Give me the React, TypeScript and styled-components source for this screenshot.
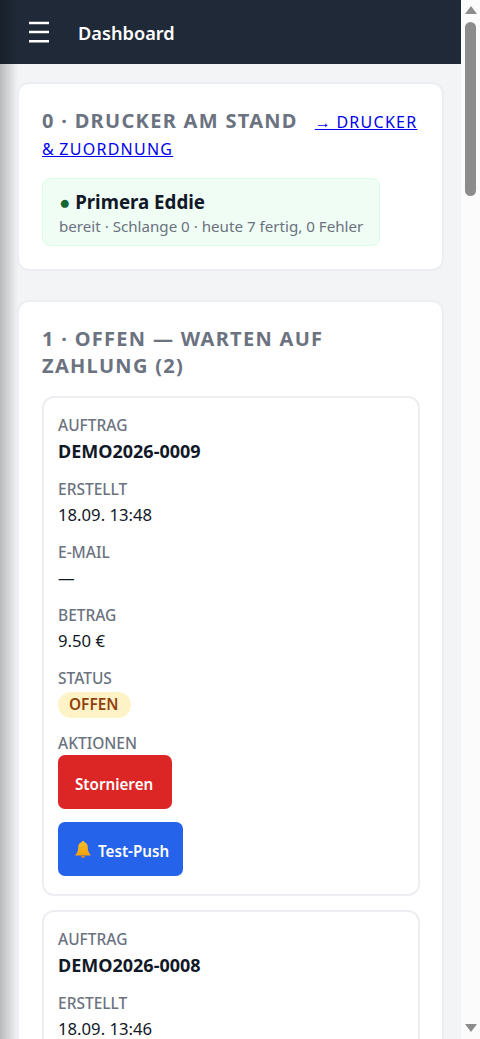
import React from 'react';
import styled, { createGlobalStyle } from 'styled-components';

const GlobalStyle = createGlobalStyle`
  html, body {
    margin: 0;
    padding: 0;
    height: 100%;
    overflow: hidden;
    background: #fafafa;
  }
  body {
    font-family: "Noto Sans", "Open Sans", sans-serif;
    color: #111827;
  }
  * { box-sizing: border-box; }
`;

const Shell = styled.div`
  display: flex;
  width: 480px;
  height: 1039px;
  overflow: hidden;
`;

const Page = styled.div`
  position: relative;
  width: 461px;
  height: 1039px;
  flex: none;
  overflow: hidden;
  background: #f3f4f6;
  &::before {
    content: "";
    position: absolute;
    left: 0;
    top: 0;
    bottom: 0;
    width: 18px;
    background: linear-gradient(to right, rgba(0, 0, 0, 0.24), rgba(0, 0, 0, 0));
    z-index: 2;
  }
`;

const TopBar = styled.header`
  display: flex;
  align-items: center;
  gap: 29px;
  height: 64px;
  padding-left: 29px;
  background: #1f2937;
  color: #fff;
`;

const MenuIcon = styled.svg`
  width: 20px;
  height: 22px;
  display: block;
`;

const PageTitle = styled.div`
  margin-top: 1px;
  font-size: 18.2px;
  font-weight: 600;
`;

const Content = styled.main`
  display: flex;
  flex-direction: column;
  gap: 29px;
  padding: 18px 17px 0;
`;

const Panel = styled.section`
  padding: 23px 22px 23px 23px;
  background: #fff;
  border: 2px solid #eceef1;
  border-radius: 12px;
`;

const SectionTitle = styled.h2`
  margin: 0 0 17px;
  font-size: 20px;
  line-height: 27px;
  font-weight: 700;
  letter-spacing: 1.3px;
  color: #6b7280;
  text-transform: uppercase;
`;

const SectionLink = styled.a`
  margin-left: 17px;
  font-size: 16px;
  line-height: 20px;
  font-weight: 400;
  letter-spacing: 1.25px;
  word-spacing: -1px;
  color: #0000ee;
  text-decoration: underline;
`;

const PrinterBox = styled.div`
  width: 338px;
  padding: 8px 16px 10px;
  background: #f0fdf4;
  border: 1px solid #dcfce7;
  border-radius: 8px;
`;

const PrinterName = styled.div`
  font-size: 18.7px;
  line-height: 30px;
  font-weight: 700;
  color: #111827;
`;

const StatusDot = styled.span`
  color: #166534;
`;

const PrinterInfo = styled.div`
  font-size: 15.15px;
  line-height: 18px;
  color: #6b7280;
  white-space: nowrap;
`;

const OrderList = styled.div`
  display: flex;
  flex-direction: column;
  gap: 14px;
`;

const OrderCard = styled.article`
  padding: 17px 14px 18px;
  background: #fff;
  border: 2px solid #eceef1;
  border-radius: 12px;
`;

const Field = styled.div`
  margin-bottom: 12px;
  &:last-child { margin-bottom: 0; }
`;

const FieldLabel = styled.div`
  font-size: 15.5px;
  line-height: 20px;
  font-weight: 500;
  color: #6b7280;
  text-transform: uppercase;
`;

const FieldValue = styled.div<{ $strong?: boolean }>`
  font-size: ${p => (p.$strong ? '18px' : '16.7px')};
  line-height: ${p => (p.$strong ? '32px' : '31px')};
  font-weight: ${p => (p.$strong ? 700 : 400)};
  color: #111827;
`;

const Badge = styled.span`
  display: block;
  width: fit-content;
  margin: 4px 0 15px;
  padding: 0 13px 0 11px;
  height: 26px;
  line-height: 26px;
  border-radius: 13px;
  background: #fef3c7;
  color: #92400e;
  font-size: 15.4px;
  font-weight: 600;
`;

const Actions = styled.div`
  display: flex;
  flex-direction: column;
  align-items: flex-start;
  gap: 13px;
  margin-top: 2px;
`;

const Button = styled.button<{ $tone: 'red' | 'blue' }>`
  display: inline-flex;
  align-items: center;
  gap: 7px;
  height: 54px;
  padding: 3px ${p => (p.$tone === 'red' ? '19px' : '14px')} 0 17px;
  border: 0;
  border-radius: 7px;
  font-family: inherit;
  font-size: 15.2px;
  font-weight: 600;
  color: #fff;
  background: ${p => (p.$tone === 'red' ? '#dc2626' : '#2563eb')};
`;

const BellIcon = styled.svg`
  width: 16px;
  height: 17px;
  margin-top: -3px;
  display: block;
`;

const ScrollTrack = styled.aside`
  display: flex;
  flex-direction: column;
  align-items: center;
  width: 19px;
  height: 1039px;
  flex: none;
  background: #fbfbfb;
`;

const ArrowBox = styled.svg`
  width: 12px;
  height: 8px;
  margin-top: 6px;
  flex: none;
  display: block;
`;

const ScrollThumb = styled.div`
  width: 11px;
  height: 174px;
  margin-top: 8px;
  border-radius: 6px;
  background: #8c8c8c;
`;

const ScrollSpacer = styled.div`
  flex: 1;
`;

const BottomArrow = styled(ArrowBox)`
  margin: 0 0 7px;
`;

const Bell = () => (
  <BellIcon viewBox="1.7 1 12.6 14.3" aria-hidden="true">
    <defs>
      <linearGradient id="bell" x1="0" y1="0" x2="0" y2="1">
        <stop offset="0" stopColor="#fbc02d" />
        <stop offset="1" stopColor="#f59e0b" />
      </linearGradient>
    </defs>
    <path d="M8 1c-.7 0-1.2.5-1.2 1.1C4.9 2.7 4 4.3 4 6.3c0 3-.9 4.8-2.3 6.2v.8h12.6v-.8C12.9 11.1 12 9.3 12 6.3c0-2-.9-3.6-2.8-4.2C9.2 1.5 8.7 1 8 1z" fill="url(#bell)" />
    <path d="M6.3 13.6a1.7 1.7 0 0 0 3.4 0z" fill="#e08a1e" />
  </BellIcon>
);

type OrderProps = {
  id: string;
  created: string;
};

const Order = ({ id, created }: OrderProps) => (
  <OrderCard>
    <Field>
      <FieldLabel>Auftrag</FieldLabel>
      <FieldValue $strong>{id}</FieldValue>
    </Field>
    <Field>
      <FieldLabel>Erstellt</FieldLabel>
      <FieldValue>{created}</FieldValue>
    </Field>
    <Field>
      <FieldLabel>E-Mail</FieldLabel>
      <FieldValue>—</FieldValue>
    </Field>
    <Field>
      <FieldLabel>Betrag</FieldLabel>
      <FieldValue>9.50 €</FieldValue>
    </Field>
    <Field>
      <FieldLabel>Status</FieldLabel>
      <Badge>OFFEN</Badge>
    </Field>
    <Field>
      <FieldLabel>Aktionen</FieldLabel>
      <Actions>
        <Button $tone="red">Stornieren</Button>
        <Button $tone="blue"><Bell />Test-Push</Button>
      </Actions>
    </Field>
  </OrderCard>
);

export default function App() {
  return (
    <Shell>
      <GlobalStyle />
      <Page>
        <TopBar>
          <MenuIcon viewBox="0 0 20 22" aria-hidden="true">
            <path d="M0 2h20M0 11h20M0 20.3h20" stroke="#fff" strokeWidth="2.4" />
          </MenuIcon>
          <PageTitle>Dashboard</PageTitle>
        </TopBar>
        <Content>
          <Panel>
            <SectionTitle>
              0 · Drucker am Stand
              <SectionLink href="#">→ Drucker &amp; Zuordnung</SectionLink>
            </SectionTitle>
            <PrinterBox>
              <PrinterName><StatusDot>●</StatusDot> Primera Eddie</PrinterName>
              <PrinterInfo>bereit · Schlange 0 · heute 7 fertig, 0 Fehler</PrinterInfo>
            </PrinterBox>
          </Panel>
          <Panel>
            <SectionTitle>1 · Offen — warten auf Zahlung (2)</SectionTitle>
            <OrderList>
              <Order id="DEMO2026-0009" created="18.09. 13:48" />
              <Order id="DEMO2026-0008" created="18.09. 13:46" />
            </OrderList>
          </Panel>
        </Content>
      </Page>
      <ScrollTrack>
        <ArrowBox viewBox="0 0 12 8" aria-hidden="true">
          <path d="M6 0l6 8H0z" fill="#8c8c8c" />
        </ArrowBox>
        <ScrollThumb />
        <ScrollSpacer />
        <BottomArrow viewBox="0 0 12 8" aria-hidden="true">
          <path d="M0 0h12L6 8z" fill="#8c8c8c" />
        </BottomArrow>
      </ScrollTrack>
    </Shell>
  );
}
